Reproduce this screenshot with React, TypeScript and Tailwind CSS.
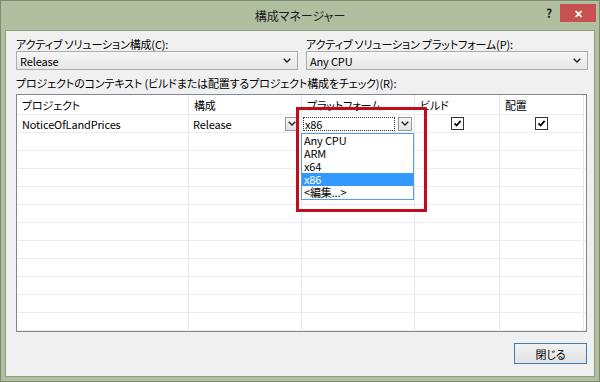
import React from "react";

const ROWS = 11;

function Chevron() {
  return (
    <svg width="8" height="5" viewBox="0 0 8 5">
      <path d="M0.7 0.7 L4 4 L7.3 0.7" fill="none" stroke="#222" strokeWidth="1.4" />
    </svg>
  );
}

function ArrowButton({ w }: { w: string }) {
  return (
    <div
      className={`${w} flex h-[14px] items-center justify-center border border-[#9a9a9a] bg-linear-to-b from-[#f6f6f6] to-[#e2e2e2]`}
    >
      <Chevron />
    </div>
  );
}

function Check() {
  return (
    <div className="flex h-[13px] w-[13px] items-center justify-center border border-[#333] bg-white">
      <svg width="9" height="9" viewBox="0 0 9 9">
        <path d="M1.5 4.3 L3.6 6.5 L7.6 1.8" fill="none" stroke="#000" strokeWidth="1.8" />
      </svg>
    </div>
  );
}

function Select({ value }: { value: string }) {
  return (
    <div className="flex h-[19px] w-[282px] items-center justify-between border border-[#acacac] bg-linear-to-b from-[#f5f5f5] to-[#e7e7e7] pl-[3px] pr-[6px]">
      <span>{value}</span>
      <Chevron />
    </div>
  );
}

const COLS = ["w-[172px]", "w-[113px]", "w-[113px]", "w-[85px]", "w-[84px]"];
const HEAD = ["プロジェクト", "構成", "プラットフォーム", "ビルド", "配置"];
const OPTIONS = ["Any CPU", "ARM", "x64", "x86", "<編集...>"];

export default function App() {
  return (
    <div className="flex h-[382px] w-[600px] flex-col border border-[#7d8c6f] bg-[#b0bf9f] font-['Noto_Sans_CJK_JP',sans-serif] text-[11px] leading-[14px] text-black [font-feature-settings:'palt']">
      <div className="relative flex h-[29px] shrink-0 items-center justify-center text-[12px] text-[#1e1e1e]">
        構成マネージャー
        <span className="absolute left-[545px] top-[5px] text-[12px] font-bold">?</span>
        <div className="absolute left-[559px] top-[3px] flex h-[18px] w-[36px] items-center justify-center bg-[#c75050] text-[11px] font-bold text-white">
          ✕
        </div>
      </div>

      <div className="mx-[4px] mb-[4px] flex-1 border border-[#8e9e7f] bg-[#f0f0f0] pl-[10px] pt-[6px] tracking-[-0.15px]">
        <div className="flex gap-[8px]">
          <div>
            <div>アクティブ ソリューション構成(C):</div>
            <Select value="Release" />
          </div>
          <div>
            <div>アクティブ ソリューション プラットフォーム(P):</div>
            <Select value="Any CPU" />
          </div>
        </div>

        <div className="mt-[6px]">
          プロジェクトのコンテキスト (ビルドまたは配置するプロジェクト構成をチェック)(R):
        </div>

        <div className="relative mt-[4px] w-[571px] border border-[#828790] bg-white">
          <div className="flex h-[20px] border-b border-[#ececec]">
            {HEAD.map((h, i) => (
              <div key={h} className={`${COLS[i]} flex items-center border-r border-[#e0e9f3] pl-[5px]`}>
                {h}
              </div>
            ))}
            <div className="flex-1" />
          </div>

          <div className="flex h-[18px] border-b border-[#ececec]">
            <div className={`${COLS[0]} flex items-center border-r border-[#e0e9f3] pl-[5px]`}>
              NoticeOfLandPrices
            </div>
            <div className={`${COLS[1]} flex items-center justify-between border-r border-[#e0e9f3] pl-[4px] pr-[3px]`}>
              <span>Release</span>
              <ArrowButton w="w-[13px]" />
            </div>
            <div className={`${COLS[2]} flex items-center gap-[3px] border-r border-[#e0e9f3] pl-[1px]`}>
              <div className="flex h-[14px] w-[92px] items-center border border-dotted border-[#333] pl-[1px]">x86</div>
              <ArrowButton w="w-[14px]" />
            </div>
            <div className={`${COLS[3]} flex items-center justify-center border-r border-[#e0e9f3]`}>
              <Check />
            </div>
            <div className={`${COLS[4]} flex items-center justify-center border-r border-[#e0e9f3]`}>
              <Check />
            </div>
            <div className="flex-1" />
          </div>

          {Array.from({ length: ROWS }).map((_, r) => (
            <div key={r} className="flex h-[18px] border-b border-[#ececec] last:border-b-0">
              {COLS.map((c, i) => (
                <div key={i} className={`${c} border-r border-[#e0e9f3]`} />
              ))}
              <div className="flex-1" />
            </div>
          ))}

          {/* dropdown list */}
          <div className="absolute left-[284px] top-[38px] w-[113px] border border-[#569de5] bg-white">
            {OPTIONS.map((o) => (
              <div
                key={o}
                className={`flex h-[13px] items-center pl-[2px] leading-[13px] ${o === "x86" ? "bg-[#3399ff] text-white" : ""}`}
              >
                {o}
              </div>
            ))}
          </div>

          {/* annotation box */}
          <div className="absolute left-[279px] top-[12px] h-[105px] w-[131px] border-[3px] border-[#c00d1e]" />
        </div>

        <div className="mt-[11px] flex w-[571px] justify-end">
          <button className="flex h-[21px] w-[73px] items-center justify-center border border-[#3c7fb1] bg-linear-to-b from-[#f2f2f2] to-[#e3e3e3]">
            閉じる
          </button>
        </div>
      </div>
    </div>
  );
}
